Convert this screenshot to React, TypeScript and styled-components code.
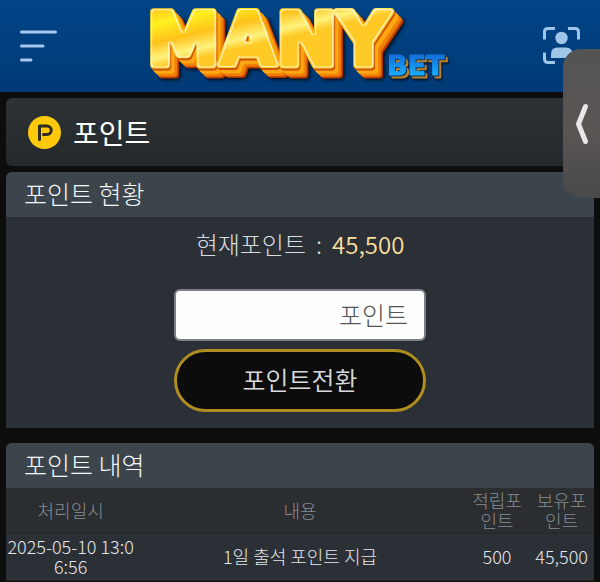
import React, { useState } from "react";
import styled, { createGlobalStyle } from "styled-components";

const GlobalStyle = createGlobalStyle`
  *, *::before, *::after { box-sizing: border-box; }
  body {
    margin: 0;
    background: #0d0d0d;
    color: #e6e8ea;
    font-family: "Noto Sans CJK KR", "Noto Sans", sans-serif;
    font-weight: 300;
  }
  button, input { font: inherit; }
`;

const Page = styled.div`
  position: relative;
  overflow-x: hidden;
`;

const TopBar = styled.header`
  display: flex;
  align-items: center;
  justify-content: space-between;
  height: 92px;
  padding: 0 20px;
  background: linear-gradient(#004486, #003a76);
`;

const IconButton = styled.button`
  display: flex;
  padding: 0;
  border: 0;
  background: none;
  cursor: pointer;
`;

const LogoLink = styled.a`
  display: flex;
  height: 92px;
`;

const Main = styled.main`
  display: flex;
  flex-direction: column;
  gap: 6px;
  padding: 6px 6px 0;
`;

const TitleCard = styled.div`
  display: flex;
  align-items: center;
  gap: 12px;
  height: 68px;
  padding: 0 22px;
  border-radius: 6px;
  background: linear-gradient(#2d3236, #25292c);
`;

const Title = styled.h1`
  margin: 0;
  color: #fff;
  font-size: 28px;
  font-weight: 400;
  line-height: 40px;
`;

const Panel = styled.section<{ $spaced?: boolean }>`
  margin-top: ${(p) => (p.$spaced ? "9px" : "0")};
  border-radius: 6px 6px 0 0;
  background: #2b3036;
  overflow: hidden;
`;

const PanelTitle = styled.h2`
  margin: 0;
  padding: 0 18px 3px;
  background: #3d454c;
  color: #f4f6f8;
  font-size: 25px;
  font-weight: 300;
  line-height: 42px;
`;

const Form = styled.form`
  display: flex;
  flex-direction: column;
  align-items: center;
  gap: 8px;
  padding: 11px 16px 16px;
`;

const Balance = styled.p`
  display: flex;
  gap: 10px;
  margin: 0 0 21px;
  color: #d9dce0;
  font-size: 24px;
  line-height: 32px;
`;

const Amount = styled.span`
  color: #fbdf9f;
  font-weight: 350;
`;

const PointInput = styled.input`
  width: 252px;
  height: 52px;
  padding: 0 16px 3px;
  border: 2px solid #7c7f83;
  border-radius: 6px;
  background: #fefefe;
  color: #333;
  font-size: 25px;
  text-align: right;
  &::placeholder { color: #555; opacity: 1; }
`;

const SubmitButton = styled.button`
  width: 252px;
  height: 63px;
  padding: 0 16px 4px;
  border: 3px solid #b08d20;
  border-radius: 32px;
  background: #0c0c0c;
  color: #d9dade;
  font-size: 25px;
  font-weight: 350;
  cursor: pointer;
`;

const Table = styled.table`
  width: 100%;
  table-layout: fixed;
  border-collapse: collapse;
  font-size: 18px;
  line-height: 20px;
  text-align: center;
  word-break: break-all;
`;

const Col = styled.col<{ $width: string }>`
  width: ${(p) => p.$width};
`;

const HeadCell = styled.th`
  height: 45px;
  padding: 0;
  border-bottom: 1px solid #23272a;
  background: #2a2e31;
  color: #888c8f;
  font-weight: 300;
`;

const Cell = styled.td`
  height: 47px;
  padding: 0 0 2px;
  border-bottom: 1px solid #23272a;
  color: #e6e8ea;
`;

const DrawerTab = styled.button`
  position: absolute;
  top: 49px;
  right: 0;
  display: flex;
  align-items: center;
  justify-content: center;
  width: 37px;
  height: 149px;
  padding: 0;
  border: 0;
  border-radius: 18px 0 0 18px;
  background: linear-gradient(#545454, #5a5553 55%, #48494b);
  cursor: pointer;
`;

const MenuIcon = () => (
  <svg width="37" height="32" viewBox="0 0 37 32" fill="none" stroke="#a6c8ee" strokeWidth="3" strokeLinecap="round" aria-hidden="true">
    <path d="M1.5 2H35.5M1.5 16H23M1.5 30H11" />
  </svg>
);

const ProfileIcon = () => (
  <svg width="37" height="38" viewBox="0 0 37 38" aria-hidden="true">
    <path d="M1.5 12.5V5Q1.5 1.5 5 1.5H12M25 1.5H32Q35.5 1.5 35.5 5V12.5M1.5 25.5V32Q1.5 35.5 5 35.5H12" fill="none" stroke="#9fc6e8" strokeWidth="3" />
    <circle cx="18.5" cy="11" r="6.2" fill="#9fc6e8" />
    <path d="M8 31V27Q8 20.5 14.5 20.5H23Q29.5 20.5 29.5 27V31Z" fill="#9fc6e8" />
  </svg>
);

const PointIcon = () => (
  <svg width="33" height="33" viewBox="0 0 33 33" aria-hidden="true">
    <circle cx="16.5" cy="16.5" r="16.5" fill="#ffc90b" />
    <path d="M11.5 23.5V10H19A4 4 0 0 1 19 18.500H15.5" fill="none" stroke="#2e2d20" strokeWidth="3" strokeLinecap="round" strokeLinejoin="round" />
  </svg>
);

const LogoWord = styled.text`
  font-family: "DejaVu Sans", sans-serif;
  font-weight: 700;
  stroke-linejoin: round;
  paint-order: stroke;
`;

const layers = [
  { color: "#a93204", dx: 9, dy: 10 },
  { color: "#c84a05", dx: 8, dy: 9 },
  { color: "#f07c08", dx: 7, dy: 8 },
  { color: "#f58a08", dx: 5, dy: 6 },
  { color: "#ffae12", dx: 4, dy: 5 },
  { color: "#ffa50f", dx: 3, dy: 4 },
  { color: "#c9540a", dx: 1, dy: 2 },
];

const Logo = () => (
  <svg width="316" height="92" viewBox="0 0 316 92" role="img" aria-label="MANY BET">
    <defs>
      <linearGradient id="gold" gradientUnits="userSpaceOnUse" x1="0" y1="8" x2="14" y2="68">
        <stop offset="0" stopColor="#ffbe1c" />
        <stop offset="0.3" stopColor="#fff020" />
        <stop offset="0.6" stopColor="#ffc21a" />
        <stop offset="0.85" stopColor="#fff27c" />
        <stop offset="1" stopColor="#ffc926" />
      </linearGradient>
      <linearGradient id="sky" gradientUnits="userSpaceOnUse" x1="0" y1="56" x2="0" y2="74">
        <stop offset="0" stopColor="#1372dc" />
        <stop offset="1" stopColor="#19a9fb" />
      </linearGradient>
      <filter id="extrude" filterUnits="userSpaceOnUse" x="0" y="0" width="316" height="92" colorInterpolationFilters="sRGB">
        <feGaussianBlur in="SourceAlpha" stdDeviation="2" result="soft" />
        <feOffset in="soft" dx="10" dy="11" result="shade" />
        {layers.map((l) => (
          <React.Fragment key={l.dx}>
            <feFlood floodColor={l.color} result={`c${l.dx}`} />
            <feOffset in="SourceAlpha" dx={l.dx} dy={l.dy} result={`o${l.dx}`} />
            <feComposite in={`c${l.dx}`} in2={`o${l.dx}`} operator="in" result={`l${l.dx}`} />
          </React.Fragment>
        ))}
        <feMorphology in="SourceAlpha" operator="erode" radius="1" result="e1" />
        <feMorphology in="SourceAlpha" operator="erode" radius="2" result="e2" />
        <feComposite in="e1" in2="e2" operator="out" result="ring" />
        <feFlood floodColor="#fff6c8" floodOpacity="0.9" result="cream" />
        <feComposite in="cream" in2="ring" operator="in" result="line" />
        <feMerge>
          <feMergeNode in="shade" />
          {layers.map((l) => (
            <feMergeNode key={l.dx} in={`l${l.dx}`} />
          ))}
          <feMergeNode in="SourceGraphic" />
          <feMergeNode in="line" />
        </feMerge>
      </filter>
      <filter id="bevel" filterUnits="userSpaceOnUse" x="230" y="40" width="86" height="52" colorInterpolationFilters="sRGB">
        <feDropShadow dx="1" dy="1" stdDeviation="0" floodColor="#0c3158" />
        <feDropShadow dx="2" dy="2" stdDeviation="0" floodColor="#c08428" />
        <feDropShadow dx="1" dy="2" stdDeviation="1" floodColor="#00152f" />
      </filter>
    </defs>
    <g filter="url(#extrude)">
      <LogoWord x="5" y="65" fontSize="73" fill="url(#gold)" stroke="url(#gold)" strokeWidth="7">MANY</LogoWord>
    </g>
    <g filter="url(#bevel)">
      <LogoWord x="245" y="75" fontSize="27" fill="url(#sky)" stroke="url(#sky)" strokeWidth="1">BET</LogoWord>
    </g>
  </svg>
);

const ChevronIcon = () => (
  <svg width="14" height="42" viewBox="0 0 14 42" fill="none" stroke="#e8e6ea" strokeWidth="5" strokeLinecap="round" strokeLinejoin="round" aria-hidden="true">
    <path d="M10.5 3.5L3.5 21L10.5 38.5" />
  </svg>
);

const history = [
  { date: "2025-05-10 13:06:56", text: "1일 출석 포인트 지급", earned: "500", total: "45,500" },
];

export default function App() {
  const [points, setPoints] = useState("");

  return (
    <Page>
      <GlobalStyle />
      <TopBar>
        <IconButton type="button" aria-label="메뉴"><MenuIcon /></IconButton>
        <LogoLink href="#"><Logo /></LogoLink>
        <IconButton type="button" aria-label="내 정보"><ProfileIcon /></IconButton>
      </TopBar>
      <Main>
        <TitleCard>
          <PointIcon />
          <Title>포인트</Title>
        </TitleCard>
        <Panel>
          <PanelTitle>포인트 현황</PanelTitle>
          <Form onSubmit={(e) => e.preventDefault()}>
            <Balance>
              <span>현재포인트</span>
              <span>:</span>
              <Amount>45,500</Amount>
            </Balance>
            <PointInput
              aria-label="포인트"
              placeholder="포인트"
              inputMode="numeric"
              value={points}
              onChange={(e) => setPoints(e.target.value)}
            />
            <SubmitButton type="submit">포인트전환</SubmitButton>
          </Form>
        </Panel>
        <Panel $spaced>
          <PanelTitle>포인트 내역</PanelTitle>
          <Table>
            <colgroup>
              <Col $width="22%" />
              <Col $width="56%" />
              <Col $width="11%" />
              <Col $width="11%" />
            </colgroup>
            <thead>
              <tr>
                <HeadCell scope="col">처리일시</HeadCell>
                <HeadCell scope="col">내용</HeadCell>
                <HeadCell scope="col">적립포인트</HeadCell>
                <HeadCell scope="col">보유포인트</HeadCell>
              </tr>
            </thead>
            <tbody>
              {history.map((row) => (
                <tr key={row.date}>
                  <Cell>{row.date}</Cell>
                  <Cell>{row.text}</Cell>
                  <Cell>{row.earned}</Cell>
                  <Cell>{row.total}</Cell>
                </tr>
              ))}
            </tbody>
          </Table>
        </Panel>
      </Main>
      <DrawerTab type="button" aria-label="열기"><ChevronIcon /></DrawerTab>
    </Page>
  );
}
